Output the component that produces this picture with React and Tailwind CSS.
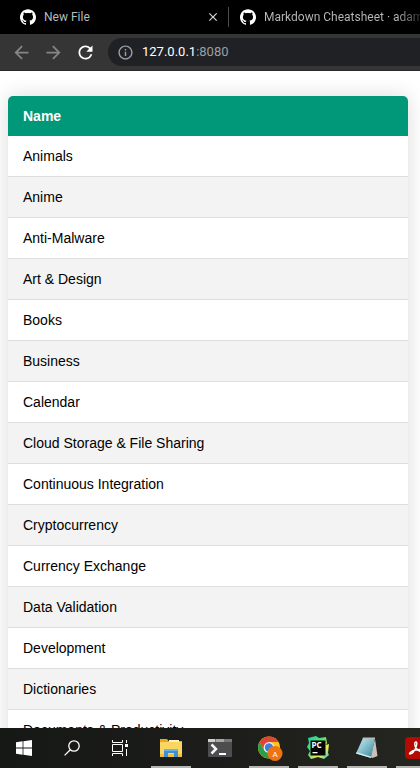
import React from "react";
import { SiGithub } from "react-icons/si";
import { MdArrowBack, MdArrowForward, MdRefresh, MdInfoOutline, MdClose } from "react-icons/md";

const categories = [
  "Animals",
  "Anime",
  "Anti-Malware",
  "Art & Design",
  "Books",
  "Business",
  "Calendar",
  "Cloud Storage & File Sharing",
  "Continuous Integration",
  "Cryptocurrency",
  "Currency Exchange",
  "Data Validation",
  "Development",
  "Dictionaries",
  "Documents & Productivity",
];

function TabStrip() {
  return (
    <nav className="flex h-[34px] shrink-0 items-center overflow-hidden bg-black pl-5 text-xs text-[#b8babd]">
      <div className="flex w-[208px] shrink-0 items-center gap-2">
        <SiGithub className="size-4 shrink-0 text-white" />
        <span className="grow whitespace-nowrap">New File</span>
        <button aria-label="Close tab" className="mr-2 text-[#d8dadd]">
          <MdClose className="size-3.5" />
        </button>
      </div>
      <div className="h-5 w-px shrink-0 bg-[#4a4c50]" />
      <div className="ml-[11px] flex min-w-0 grow items-center gap-2">
        <SiGithub className="size-4 shrink-0 text-white" />
        <span className="min-w-0 grow overflow-hidden whitespace-nowrap bg-linear-to-r from-[#b8babd] from-85% to-[#303133] bg-clip-text text-transparent">
          Markdown Cheatsheet · adam
        </span>
      </div>
    </nav>
  );
}

function Toolbar() {
  return (
    <header className="flex h-[37px] shrink-0 items-center border-b border-[#29292b] bg-[#353535] pl-[11px]">
      <div className="flex items-center gap-[11px]">
        <button aria-label="Back" className="text-[#868686]">
          <MdArrowBack className="size-[21px]" />
        </button>
        <button aria-label="Forward" className="text-[#868686]">
          <MdArrowForward className="size-[21px]" />
        </button>
        <button aria-label="Reload" className="text-white">
          <MdRefresh className="size-[21px]" />
        </button>
      </div>
      <div className="ml-3 flex h-7 grow items-center gap-2 rounded-l-full bg-[#202124] pl-[9px] text-[13px]">
        <MdInfoOutline className="size-[17px] text-[#9aa0a6]" />
        <span className="text-[#9aa0a6]">
          <span className="text-white">127.0.0.1</span>:8080
        </span>
      </div>
    </header>
  );
}

function CategoryTable() {
  return (
    <div className="overflow-hidden rounded-t-[5px] shadow-[0_0_20px_rgba(0,0,0,0.15)]">
      <table className="w-full border-collapse font-['Liberation_Sans',Arial,sans-serif] text-sm leading-4 text-black">
        <thead>
          <tr className="bg-[#009879] text-left text-white">
            <th className="px-[15px] py-3 font-bold">Name</th>
          </tr>
        </thead>
        <tbody>
          {categories.map((name) => (
            <tr key={name} className="border-b border-[#dddddd] even:bg-[#f3f3f3]">
              <td className="px-[15px] py-3">{name}</td>
            </tr>
          ))}
        </tbody>
      </table>
    </div>
  );
}

function WindowsIcon() {
  return (
    <svg viewBox="0 0 16 16" className="size-4" fill="#fff">
      <path d="M0 2.2 6.6 1.3v6.3H0zM7.4 1.2 16 0v7.6H7.4zM0 8.4h6.6v6.3L0 13.8zM7.4 8.4H16V16l-8.6-1.2z" />
    </svg>
  );
}

function SearchIcon() {
  return (
    <svg viewBox="0 0 16 16" className="size-4" fill="none" stroke="#fff" strokeWidth="1.3">
      <circle cx="10" cy="6" r="5.2" />
      <path d="M6.3 9.7.6 15.4" />
    </svg>
  );
}

function TaskViewIcon() {
  return (
    <svg viewBox="0 0 16 16" className="size-4" fill="none" stroke="#fff">
      <path d="M.5 0v2.5h10V0M.5 16v-2.5h10V16M.5 4.5h10v7H.5zM14.5 0v3M14.5 9v7" />
      <path d="M13 4h3v3h-3z" fill="#fff" stroke="none" />
    </svg>
  );
}

function FolderIcon() {
  return (
    <svg viewBox="0 0 24 24" className="size-6">
      <path d="M1 3h7l1.5 2H23v3H1z" fill="#e8a917" />
      <path d="M10 4h10v3H10z" fill="#fff0b8" />
      <path d="M1 6h22v15H1z" fill="#fcd462" />
      <path d="M1 18h22v3H1z" fill="#f3bd3f" />
      <path d="M5 21v-7q0-1 1-1h12q1 0 1 1v7h-4v-4H9v4z" fill="#3d91cf" />
      <path d="M6 13h12q1 0 1 1v1H5v-1q0-1 1-1z" fill="#64b6e8" />
    </svg>
  );
}

function TerminalIcon() {
  return (
    <svg viewBox="0 0 24 24" className="size-6">
      <path d="M0 3h24v18H0z" fill="#4d4d4f" />
      <path d="M0 3h24v3H0z" fill="#77777a" />
      <path d="M0 3h7v3H0z" fill="#d0d0d0" />
      <path d="M8 3h8v3H8z" fill="#a8a8a8" />
      <path d="m3.500 8.500 4.500 4.500-4.500 4.500" fill="none" stroke="#f5f5f5" strokeWidth="2.5" />
      <path d="M11 17h7v2h-7z" fill="#fff" />
    </svg>
  );
}

function ChromeIcon() {
  return (
    <svg viewBox="0 0 24 24" className="size-6 overflow-visible">
      <circle cx="12" cy="11.500" r="11" fill="#fbc51c" />
      <path d="M2.500 6A11 11 0 0 1 21.500 6H12L7.200 14.200z" fill="#e04437" />
      <path d="M2.500 6A11 11 0 0 0 12 22.500L16.800 14.200H7.200z" fill="#2b9e4b" />
      <circle cx="12" cy="11.500" r="5.400" fill="#f4f6f8" />
      <circle cx="12" cy="11.500" r="4.200" fill="#3f7ee0" />
      <circle cx="18" cy="17.500" r="7.500" fill="#ee7410" />
      <text x="18" y="20.500" textAnchor="middle" fontSize="8" fontFamily="Roboto, sans-serif" fill="#fff">
        A
      </text>
    </svg>
  );
}

function PyCharmIcon() {
  return (
    <svg viewBox="0 0 24 24" className="size-6">
      <defs>
        <linearGradient id="pycharm" x1="0" y1="0" x2="1" y2="1">
          <stop offset="0.1" stopColor="#21d5a0" />
          <stop offset="0.45" stopColor="#5de26a" />
          <stop offset="0.7" stopColor="#f5ee4d" />
          <stop offset="1" stopColor="#22c8d8" />
        </linearGradient>
      </defs>
      <path d="M2 2 10 0l3 2 7-1 1 6-1 2 3-1-1 9 1 2-5 4-6-2-7 2-3-4 2-4-3-4 2-4z" fill="url(#pycharm)" />
      <path d="M4.500 4.500h15v15h-15z" fill="#050505" />
      <text x="5.500" y="12" fontSize="8" fontWeight="700" fontFamily="Noto Sans, sans-serif" fill="#fff">
        PC
      </text>
      <path d="M6.500 16h5v1.300h-5z" fill="#fff" />
    </svg>
  );
}

function NotepadIcon() {
  return (
    <svg viewBox="0 0 24 24" className="size-6">
      <defs>
        <linearGradient id="notepad" x1="0" y1="0" x2="1" y2="1">
          <stop offset="0" stopColor="#d2edf2" />
          <stop offset="0.5" stopColor="#80bccb" />
          <stop offset="1" stopColor="#387e93" />
        </linearGradient>
      </defs>
      <path d="M20 3 22.500 20l-5 2-2-1z" fill="#c9c2b8" />
      <path d="M8 2h12L16 22 1 17.500z" fill="url(#notepad)" />
      <path d="M8 1.500h12v1.600H7.500z" fill="#b7bec0" />
      <path d="m1 17.500 15 4.500.3-1.200L1.600 16.200z" fill="#d9f1f4" />
    </svg>
  );
}

function AcrobatIcon() {
  return (
    <svg viewBox="0 0 24 24" className="size-6">
      <rect x="1" y="1" width="22" height="22" rx="4" fill="#b30b00" />
      <path
        d="M6 18c-1.500 0 .5-2.800 5.500-4s7.500-.2 7 1-3.500.5-6-2.500S10.500 6 12 6s.8 4-1 7.500S7.200 18 6 18z"
        fill="none"
        stroke="#fff"
        strokeWidth="1.4"
      />
    </svg>
  );
}

const systemButtons = [
  { label: "Start", Icon: WindowsIcon },
  { label: "Search", Icon: SearchIcon },
  { label: "Task View", Icon: TaskViewIcon },
];

const apps = [
  { label: "File Explorer", Icon: FolderIcon, open: true },
  { label: "Terminal", Icon: TerminalIcon, open: false },
  { label: "Chrome", Icon: ChromeIcon, open: true },
  { label: "PyCharm", Icon: PyCharmIcon, open: true },
  { label: "Notepad", Icon: NotepadIcon, open: true },
  { label: "Acrobat", Icon: AcrobatIcon, open: true },
];

function Taskbar() {
  return (
    <footer className="flex h-10 shrink-0 overflow-hidden bg-linear-to-r from-[#161816] via-[#1c1d1a] to-[#252620]">
      {systemButtons.map(({ label, Icon }) => (
        <button key={label} aria-label={label} className="flex w-12 shrink-0 items-center justify-center">
          <Icon />
        </button>
      ))}
      <div className="ml-[3px] flex gap-px">
        {apps.map(({ label, Icon, open }) => (
          <button key={label} aria-label={label} className="flex w-12 shrink-0 flex-col items-center">
            <span className="flex grow items-center pt-0.5">
              <Icon />
            </span>
            <span className={open ? "h-0.5 w-10 bg-[#b5b5b3]" : "h-0.5 w-10"} />
          </button>
        ))}
      </div>
    </footer>
  );
}

export default function App() {
  return (
    <div className="flex h-screen flex-col overflow-hidden bg-white font-[Roboto,sans-serif]">
      <TabStrip />
      <Toolbar />
      <main className="min-h-0 grow overflow-hidden pt-[25px] pr-3 pl-2">
        <CategoryTable />
      </main>
      <Taskbar />
    </div>
  );
}
